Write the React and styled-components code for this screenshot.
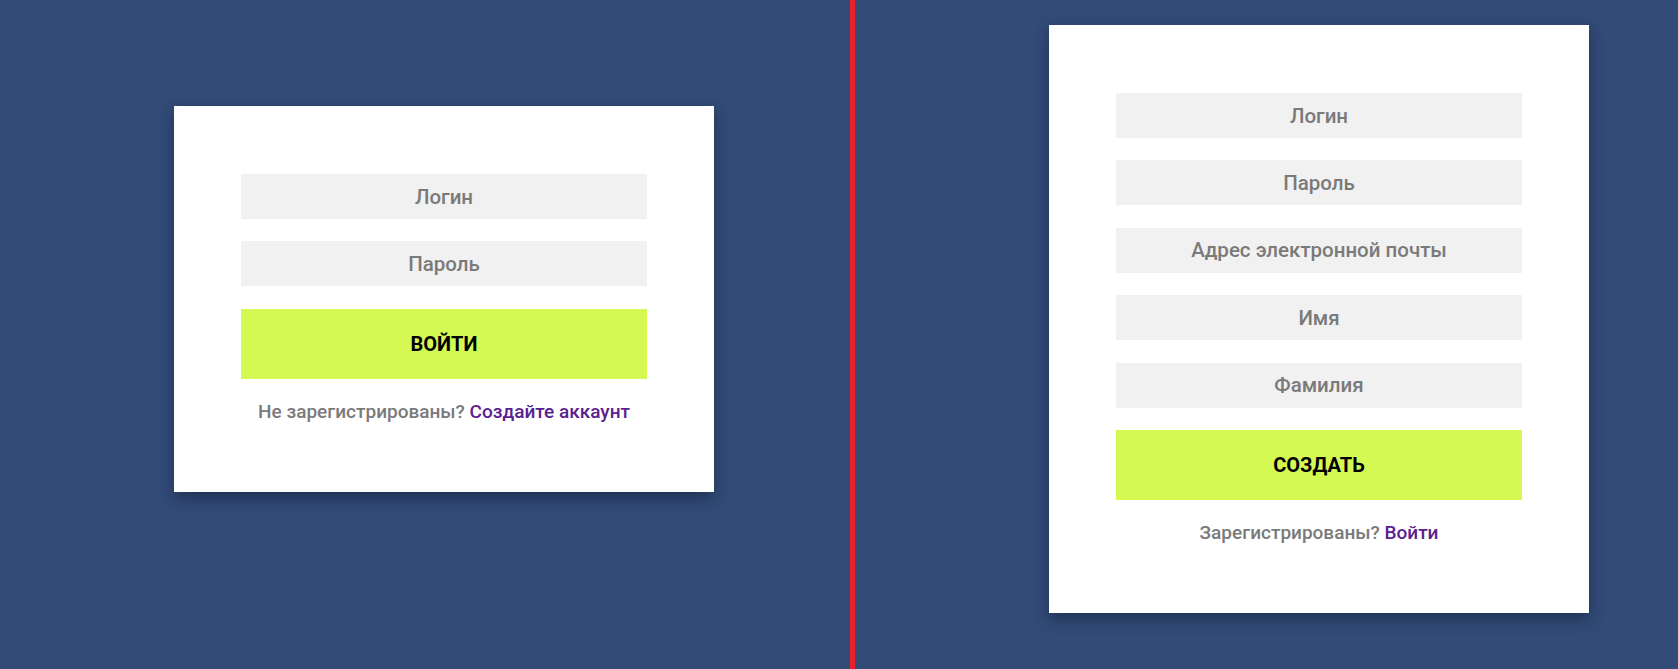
import React from 'react';
import styled, { createGlobalStyle } from 'styled-components';

const GlobalStyle = createGlobalStyle`
  html, body {
    margin: 0;
    padding: 0;
    background-color: #324b77;
  }
  * {
    box-sizing: border-box;
  }
`;

const Page = styled.div`
  display: flex;
  height: 669px;
  background-color: #324b77;
  font-family: 'Roboto', 'Liberation Sans', sans-serif;
`;

const Pane = styled.div`
  display: flex;
  align-items: flex-start;
  width: ${props => props.$width};
  padding-top: ${props => props.$top}px;
  padding-left: ${props => props.$left}px;
`;

const Divider = styled.div`
  width: 5px;
  height: 100%;
  background-color: #e8202a;
`;

const Card = styled.div`
  width: 540px;
  padding: 68px 67px 70px;
  background-color: #ffffff;
  box-shadow: 0 6px 14px rgba(10, 20, 40, 0.45);
  display: flex;
  flex-direction: column;
`;

const Field = styled.input`
  display: block;
  width: 100%;
  height: 45px;
  margin-bottom: 22.4px;
  border: none;
  outline: none;
  background-color: #f1f1f1;
  font-family: inherit;
  font-size: 20.5px;
  font-weight: 500;
  color: #333;
  text-align: center;

  &::placeholder {
    color: #7a7a7a;
  }
`;

const Submit = styled.button`
  width: 100%;
  height: 70px;
  margin-top: 0.5px;
  border: none;
  background-color: #d4f953;
  font-family: inherit;
  font-size: 20px;
  font-weight: 700;
  color: #000;
  text-transform: uppercase;
  cursor: pointer;
`;

const Note = styled.p`
  margin: 22px 0 0;
  line-height: 21px;
  font-size: 19px;
  font-weight: 500;
  color: #7a7a7a;
  text-align: center;
`;

const NoteLink = styled.a`
  color: #5b2190;
  text-decoration: none;
  cursor: pointer;
`;

function LoginForm() {
  return (
    <Card>
      <Field type="text" placeholder="Логин" />
      <Field type="password" placeholder="Пароль" />
      <Submit>Войти</Submit>
      <Note>
        Не зарегистрированы? <NoteLink>Создайте аккаунт</NoteLink>
      </Note>
    </Card>
  );
}

function RegisterForm() {
  const fields = [
    { id: 'login', type: 'text', text: 'Логин' },
    { id: 'password', type: 'password', text: 'Пароль' },
    { id: 'email', type: 'email', text: 'Адрес электронной почты' },
    { id: 'name', type: 'text', text: 'Имя' },
    { id: 'surname', type: 'text', text: 'Фамилия' },
  ];

  return (
    <Card>
      {fields.map(f => (
        <Field key={f.id} type={f.type} placeholder={f.text} />
      ))}
      <Submit>Создать</Submit>
      <Note>
        Зарегистрированы? <NoteLink>Войти</NoteLink>
      </Note>
    </Card>
  );
}

export default function App() {
  return (
    <>
      <GlobalStyle />
      <Page>
        <Pane $width="850px" $top={106} $left={174}>
          <LoginForm />
        </Pane>
        <Divider />
        <Pane $width="823px" $top={25} $left={194}>
          <RegisterForm />
        </Pane>
      </Page>
    </>
  );
}
